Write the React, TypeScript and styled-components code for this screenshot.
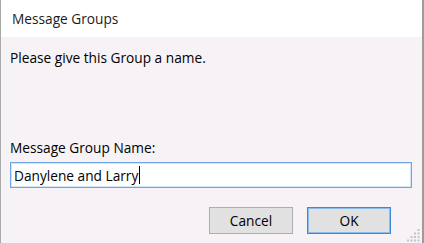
import React from "react"
import styled, { createGlobalStyle } from "styled-components"

const GlobalStyle = createGlobalStyle`
  html, body {
    margin: 0;
    padding: 0;
    background: #ffffff;
  }
  * {
    box-sizing: border-box;
  }
`

const Window = styled.div`
  width: 424px;
  height: 243px;
  display: flex;
  flex-direction: column;
  border-left: 1px solid #a9a9a9;
  border-right: 2px solid #9c9c9c;
  font-family: "Open Sans", "Noto Sans", sans-serif;
  font-size: 13.7px;
  color: #000;
  position: relative;
  overflow: hidden;
`

const TitleBar = styled.header`
  height: 37px;
  flex: 0 0 37px;
  display: flex;
  align-items: center;
  padding-left: 11px;
  background: #ffffff;
  color: #1b1b1b;
`

const Body = styled.div`
  flex: 1;
  display: flex;
  flex-direction: column;
  background: #f7f2f6;
  padding: 12px 10px 9px 9px;
`

const Text = styled.div`
  line-height: 18px;
  white-space: nowrap;
`

const Spacer = styled.div`
  flex: 1;
`

const TextBox = styled.div`
  margin-top: 5px;
  height: 26px;
  display: flex;
  align-items: center;
  padding-left: 3px;
  background: #ffffff;
  border: 1px solid #6fa6e2;
  box-shadow: inset 0 0 0 1px #d3e5f8;
  white-space: nowrap;
`

const Caret = styled.span`
  display: inline-block;
  width: 1px;
  height: 18px;
  background: #000;
  margin-left: 1px;
`

const ButtonRow = styled.div`
  display: flex;
  justify-content: flex-end;
  gap: 14px;
  margin-top: 19px;
  margin-right: 21px;
`

const Button = styled.button<{ $primary?: boolean }>`
  width: 84px;
  height: 27px;
  padding: 0;
  font-family: inherit;
  font-size: 13.7px;
  color: #000;
  background: #e1e1e1;
  border: 1px solid ${(p) => (p.$primary ? "#3b8ad9" : "#adadad")};
  box-shadow: ${(p) => (p.$primary ? "inset 0 0 0 1px #8cbcec" : "none")};
  border-radius: 0;
`

const Grip = styled.svg`
  position: absolute;
  right: 2px;
  bottom: 1px;
`

function SizeGrip() {
  const dots: [number, number][] = []
  for (let col = 0; col < 4; col++) {
    for (let row = 3 - col; row < 4; row++) {
      dots.push([col * 3.5, row * 3.5])
    }
  }
  return (
    <Grip width="13" height="13" viewBox="0 0 13 13">
      {dots.map(([x, y], i) => (
        <rect key={i} x={x} y={y} width="2" height="2" fill="#c4c4c4" />
      ))}
    </Grip>
  )
}

export default function App() {
  return (
    <>
      <GlobalStyle />
      <Window>
        <TitleBar>Message Groups</TitleBar>
        <Body>
          <Text>Please give this Group a name.</Text>
          <Spacer />
          <Text>Message Group Name:</Text>
          <TextBox>
            <span>Danylene and Larry</span>
            <Caret />
          </TextBox>
          <ButtonRow>
            <Button>Cancel</Button>
            <Button $primary>OK</Button>
          </ButtonRow>
        </Body>
        <SizeGrip />
      </Window>
    </>
  )
}
